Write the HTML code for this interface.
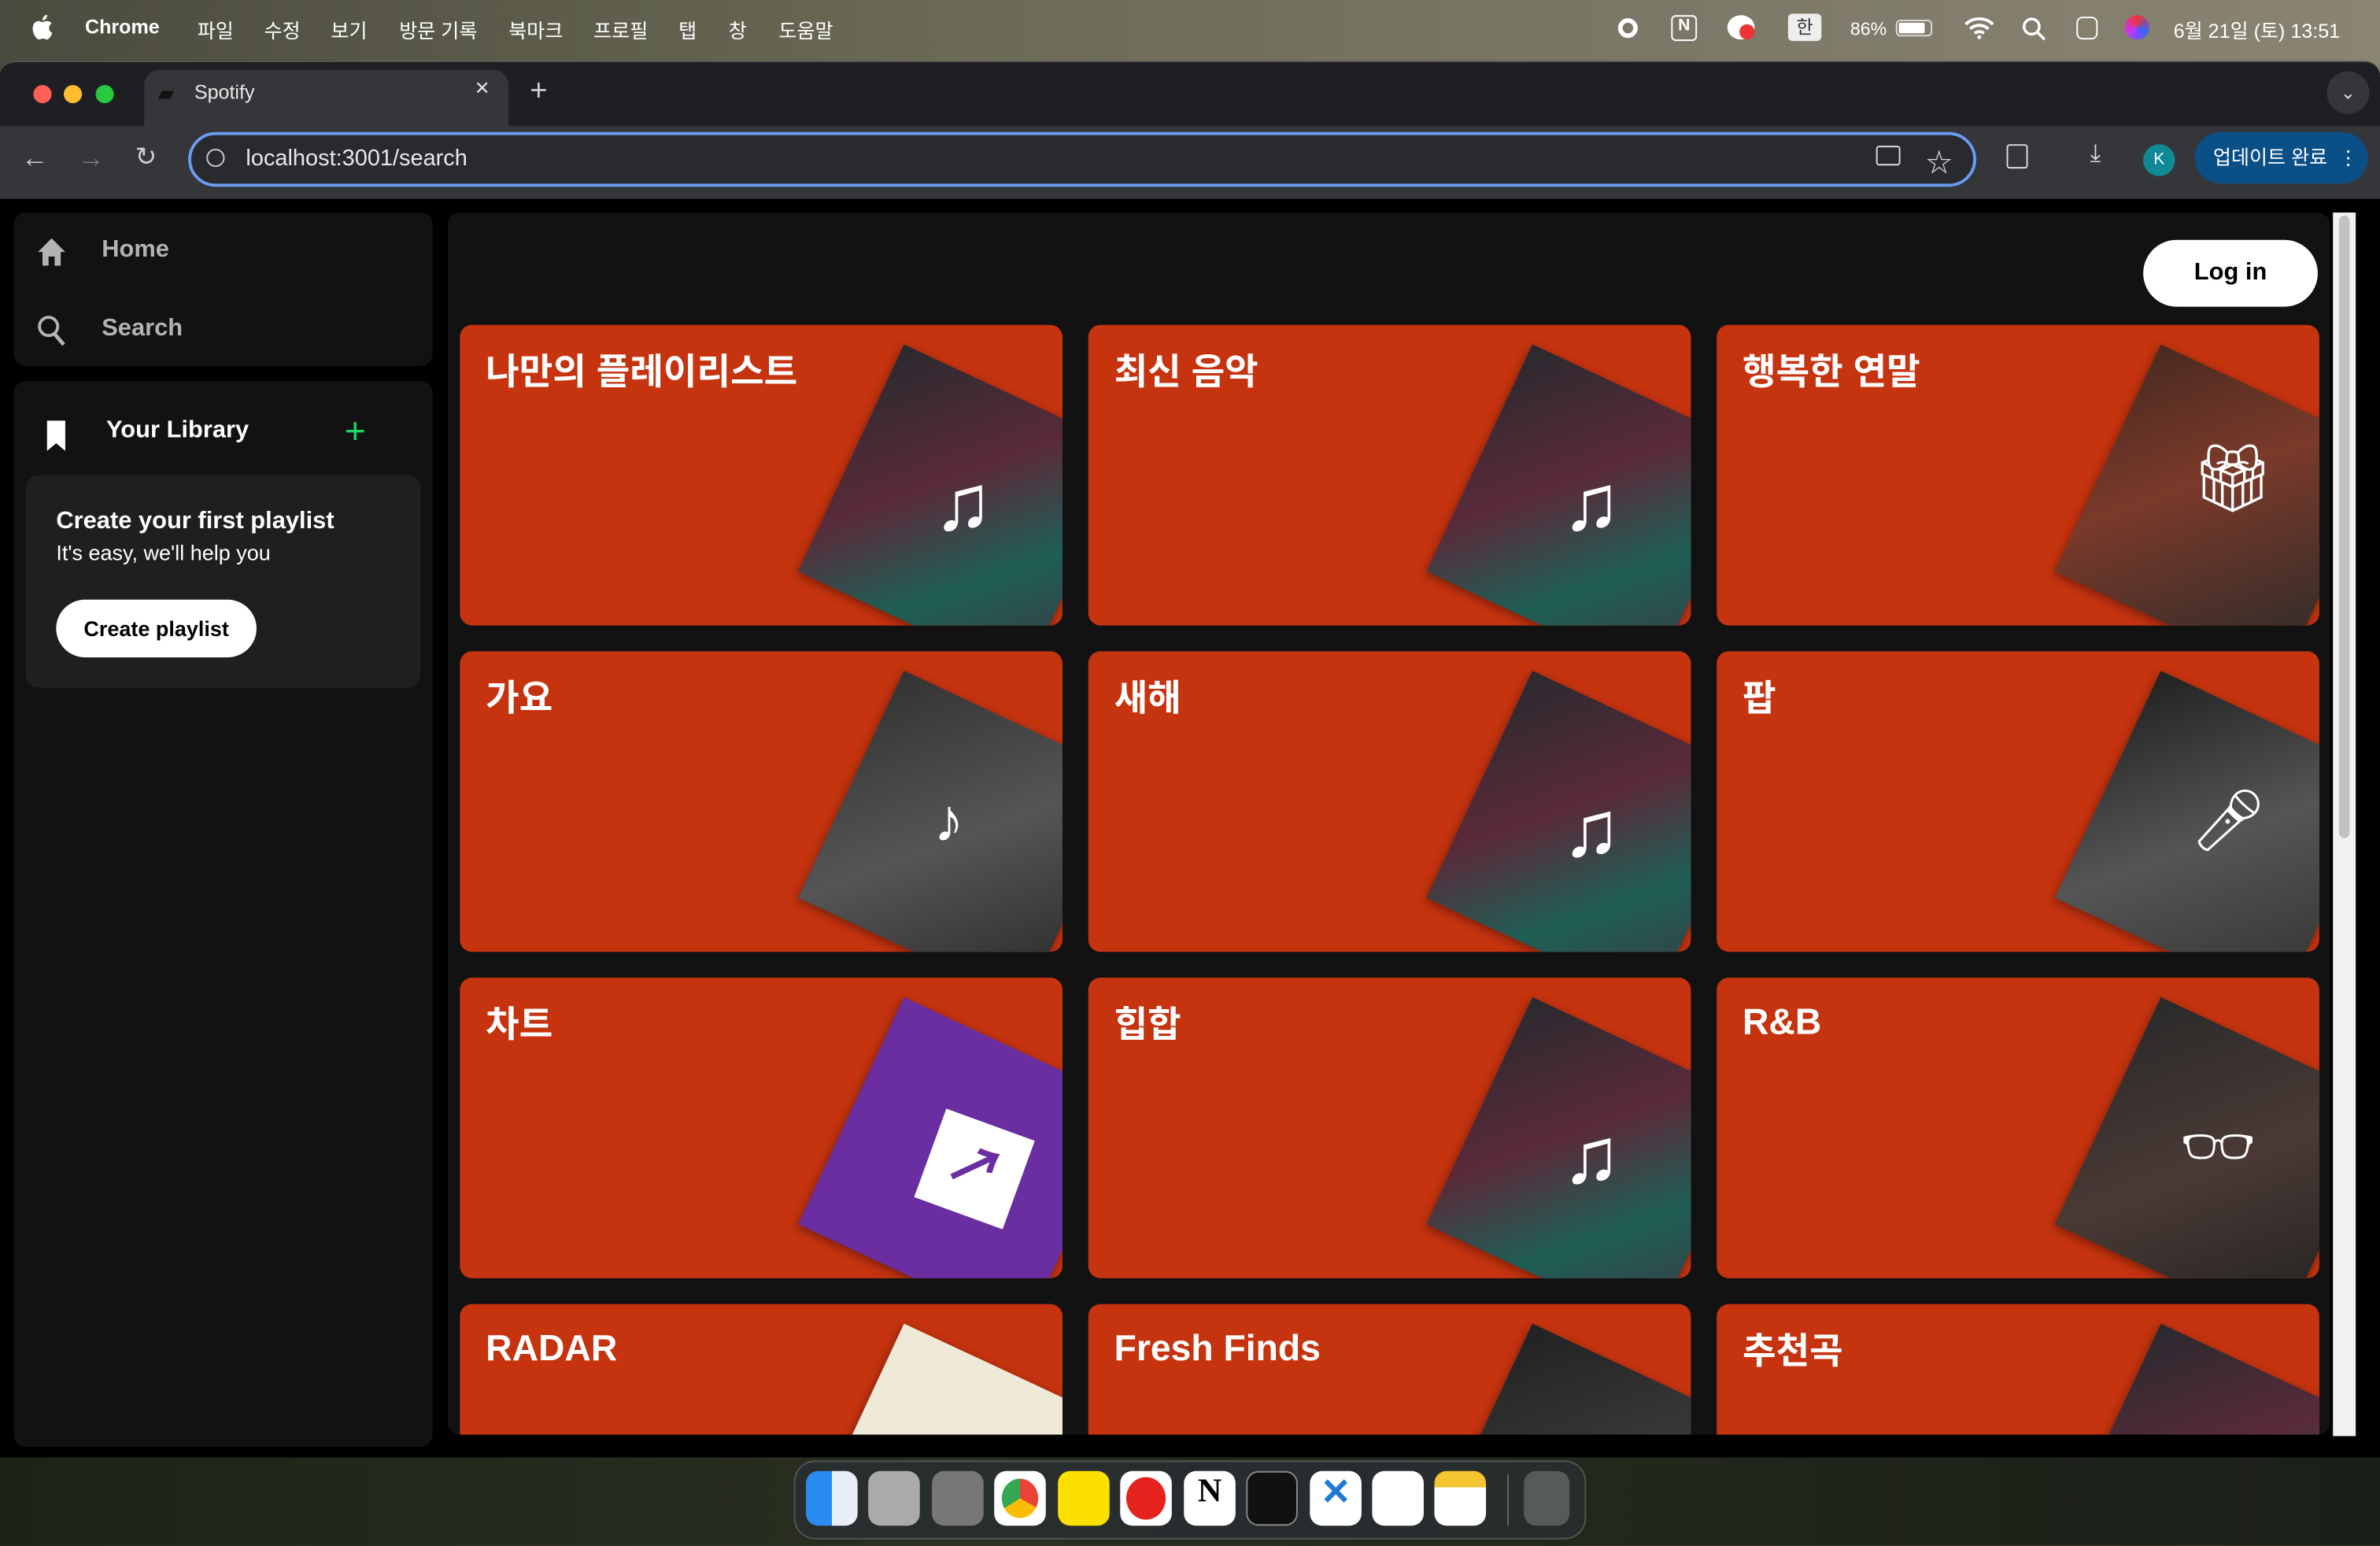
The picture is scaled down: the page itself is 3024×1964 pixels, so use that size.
<!DOCTYPE html>
<html><head><meta charset="utf-8"><style>
*{margin:0;padding:0;box-sizing:border-box}
html,body{width:3024px;height:1964px;overflow:hidden;background:#1e241c}
#s{position:absolute;left:0;top:0;width:1568px;height:1018px;transform:scale(1.92857);transform-origin:0 0;font-family:"Liberation Sans","Noto Sans CJK KR",sans-serif;background:linear-gradient(90deg,#4a4a3e,#6b6a55 40%,#7c7868 70%,#8a8472);overflow:hidden}
.a{position:absolute}
.menu{color:#fff;font-size:13px;top:10px}
.win{left:0;top:40px;width:1568px;height:920px;background:#000;border-radius:10px 10px 0 0;overflow:hidden;border-top:1px solid #555}
.tabbar{left:0;top:0;width:1568px;height:42px;background:#1e1f22}
.tool{left:0;top:42px;width:1568px;height:48px;background:#35363a}
.panel{background:#121212;border-radius:8px}
.card{background:#c5330f;border-radius:8px;overflow:hidden;width:397px;height:198px}
.card h3{position:absolute;left:17px;top:11px;color:#fff;font-size:24px;font-weight:bold}
.img{position:absolute;width:165px;height:165px;left:250px;top:40px;transform:rotate(25deg);background:linear-gradient(135deg,#2a2a2e,#5a2a3a 40%,#1f5f55 70%,#3a3a45);box-shadow:0 2px 6px rgba(0,0,0,.4)}
.note{position:absolute;left:312px;top:92px;color:#fff;font-size:52px;line-height:1}
.dock{left:523px;top:962px;width:522px;height:52px;background:rgba(40,45,50,.8);border-radius:14px;border:1px solid rgba(255,255,255,.2)}
.di{position:absolute;top:6px;width:34px;height:36px;border-radius:8px}
</style></head><body><div id="s">
<div class="a" style="left:0;top:958px;width:1568px;height:60px;background:linear-gradient(90deg,#1c2418,#2a2f20 40%,#1a1f18)"></div>
<svg class="a" style="left:20px;top:9px" width="15" height="18" viewBox="0 0 15 18"><path d="M12.3 9.5c0-2 1.6-2.9 1.7-3-1-1.4-2.4-1.6-2.9-1.6-1.2-.1-2.4.7-3 .7s-1.6-.7-2.6-.7C4.200 4.900 2.900 5.700 2.200 7c-1.400 2.400-.4 6 1 8 .7 1 1.500 2 2.500 2s1.400-.6 2.600-.6 1.500.6 2.600.6 1.700-1 2.400-2c.8-1.100 1.100-2.200 1.100-2.300 0 0-2.100-.8-2.100-3.200zM10.300 3.300c.5-.7.9-1.600.8-2.500-.8 0-1.800.5-2.300 1.200-.5.600-.9 1.500-.8 2.400.9.100 1.800-.4 2.300-1.100z" fill="#fff"/></svg>
<div class="a menu" style="left:56px;font-weight:bold">Chrome</div>
<div class="a menu" style="left:130px">파일</div><div class="a menu" style="left:174px">수정</div><div class="a menu" style="left:218px">보기</div><div class="a menu" style="left:263px">방문 기록</div><div class="a menu" style="left:335px">북마크</div><div class="a menu" style="left:391px">프로필</div><div class="a menu" style="left:447px">탭</div><div class="a menu" style="left:480px">창</div><div class="a menu" style="left:513px">도움말</div>
<div class="a menu" style="left:1219px;font-size:12px;top:12px">86%</div>
<div class="a" style="left:1249px;top:13px;width:24px;height:11px;border:1px solid #ddd;border-radius:3px"><div style="width:17px;height:7px;margin:1px;background:#fff;border-radius:1px"></div></div>
<div class="a" style="left:1178px;top:9px;width:22px;height:18px;background:#eee;border-radius:3px;color:#333;font-size:12px;text-align:center">한</div>
<div class="a" style="left:1138px;top:10px;width:18px;height:16px;border-radius:50%;background:#fff"></div>
<div class="a" style="left:1146px;top:16px;width:10px;height:10px;border-radius:50%;background:#e33"></div>
<svg class="a" style="left:1294px;top:11px" width="20" height="15" viewBox="0 0 20 15"><path d="M1 5a13 13 0 0 1 18 0M4 8a9 9 0 0 1 12 0M7 11a4.5 4.5 0 0 1 6 0" stroke="#fff" stroke-width="2" fill="none"/><circle cx="10" cy="13.5" r="1.3" fill="#fff"/></svg>
<svg class="a" style="left:1332px;top:11px" width="16" height="16" viewBox="0 0 16 16"><circle cx="6.5" cy="6.5" r="5" stroke="#fff" stroke-width="1.8" fill="none"/><path d="M10 10l5 5" stroke="#fff" stroke-width="1.8"/></svg>
<div class="a" style="left:1368px;top:11px;width:14px;height:15px;border-radius:4px;border:1.5px solid #fff"></div>
<div class="a menu" style="left:1432px">6월 21일 (토) 13:51</div>
<div class="a" style="left:1066px;top:12px;width:13px;height:13px;border-radius:50%;border:3px solid #fff"></div>
<div class="a" style="left:1101px;top:10px;width:17px;height:17px;border:1.5px solid #fff;border-radius:3px;color:#fff;font-size:11px;text-align:center;font-weight:bold">N</div>
<div class="a" style="left:1400px;top:10px;width:16px;height:16px;border-radius:50%;background:conic-gradient(#e33,#36f,#c3f,#e33)"></div>

<div class="a win">
 <div class="a tabbar">
  <div class="a" style="left:22px;top:15px;width:12px;height:12px;border-radius:50%;background:#fe5f57"></div>
  <div class="a" style="left:42px;top:15px;width:12px;height:12px;border-radius:50%;background:#febc2e"></div>
  <div class="a" style="left:63px;top:15px;width:12px;height:12px;border-radius:50%;background:#28c840"></div>
  <div class="a" style="left:95px;top:5px;width:240px;height:38px;background:#35363a;border-radius:10px 10px 0 0"></div>
  <div class="a" style="left:104px;top:12px;width:16px;height:16px;color:#111;font-size:14px">▰</div>
  <div class="a" style="left:128px;top:12px;color:#e8e8e8;font-size:13px">Spotify</div>
  <div class="a" style="left:313px;top:9px;color:#e8e8e8;font-size:16px">×</div>
  <div class="a" style="left:349px;top:8px;color:#ccc;font-size:20px">+</div>
  <div class="a" style="left:1533px;top:6px;width:28px;height:28px;border-radius:50%;background:#35363a;color:#ddd;font-size:12px;text-align:center;line-height:28px">⌄</div>
 </div>
 <div class="a tool">
  <div class="a" style="left:14px;top:11px;color:#ccc;font-size:18px">←</div>
  <div class="a" style="left:51px;top:11px;color:#777;font-size:18px">→</div>
  <div class="a" style="left:89px;top:11px;color:#ccc;font-size:17px">↻</div>
  <div class="a" style="left:124px;top:4px;width:1178px;height:36px;border:2px solid #6a9cf2;border-radius:18px;background:#282a2e"></div>
  <div class="a" style="left:136px;top:15px;width:12px;height:12px;border:1.3px solid #ccc;border-radius:50%"></div>
  <div class="a" style="left:162px;top:13px;color:#e8e8e8;font-size:15px">localhost:3001/search</div>
  <div class="a" style="left:1269px;top:10px;color:#ddd;font-size:17px">☆</div>
  <div class="a" style="left:1236px;top:13px;width:16px;height:13px;border:1.5px solid #ddd;border-radius:2px"></div>
  <div class="a" style="left:1322px;top:12px;width:14px;height:16px;border:1.5px solid #ddd;border-radius:2px"></div>
  <div class="a" style="left:1377px;top:10px;color:#ddd;font-size:16px">⤓</div>
  <div class="a" style="left:1412px;top:12px;width:21px;height:21px;border-radius:50%;background:#0f8a94;color:#fff;font-size:11px;text-align:center;line-height:21px">K</div>
  <div class="a" style="left:1446px;top:4px;width:114px;height:34px;border-radius:17px;background:#0a4f86;color:#fff;font-size:13px;line-height:34px;padding-left:12px">업데이트 완료 &nbsp;⋮</div>
 </div>
 <div class="a panel" style="left:9px;top:99px;width:276px;height:101px">
  <svg class="a" style="left:15px;top:16px" width="20" height="20" viewBox="0 0 20 20"><path d="M10 1 L19 10 H16 V19 H12 V13 H8 V19 H4 V10 H1Z" fill="#b3b3b3"/></svg>
  <div class="a" style="left:58px;top:16px;color:#b3b3b3;font-size:16px;font-weight:bold">Home</div>
  <svg class="a" style="left:15px;top:67px" width="20" height="22" viewBox="0 0 20 22"><circle cx="8" cy="8" r="6" stroke="#b3b3b3" stroke-width="2" fill="none"/><path d="M12 13 L18 20" stroke="#b3b3b3" stroke-width="2.5"/></svg>
  <div class="a" style="left:58px;top:68px;color:#b3b3b3;font-size:16px;font-weight:bold">Search</div>
 </div>
 <div class="a panel" style="left:9px;top:210px;width:276px;height:702px">
  <svg class="a" style="left:21px;top:26px" width="14" height="20" viewBox="0 0 14 20"><path d="M1 0 H13 V20 L7 15 L1 20Z" fill="#fff"/></svg>
  <div class="a" style="left:61px;top:24px;color:#fff;font-size:16px;font-weight:bold">Your Library</div>
  <div class="a" style="left:218px;top:20px;color:#1ed760;font-size:24px">+</div>
  <div class="a" style="left:8px;top:62px;width:260px;height:140px;background:#1f1f1f;border-radius:8px">
   <div class="a" style="left:20px;top:22px;color:#fff;font-size:16px;font-weight:bold">Create your first playlist</div>
   <div class="a" style="left:20px;top:43px;color:#fff;font-size:14px">It's easy, we'll help you</div>
   <div class="a" style="left:20px;top:82px;width:132px;height:38px;background:#fff;border-radius:19px;color:#000;font-size:14px;font-weight:bold;text-align:center;line-height:38px">Create playlist</div>
  </div>
 </div>
 <div class="a panel" style="left:295px;top:99px;width:1240px;height:805px;overflow:hidden">
  <div class="a" style="left:1117px;top:18px;width:115px;height:44px;background:#fff;border-radius:22px;color:#000;font-size:16px;font-weight:bold;text-align:center;line-height:44px">Log in</div>
  <div class="a card" style="left:8px;top:74px"><div class="img"></div><div class="note">♫</div><h3>나만의 플레이리스트</h3></div>
  <div class="a card" style="left:422px;top:74px"><div class="img"></div><div class="note">♫</div><h3>최신 음악</h3></div>
  <div class="a card" style="left:836px;top:74px"><div class="img" style="background:linear-gradient(135deg,#4a2a20,#7a3a2a 40%,#2a2a2a)"></div><div class="note" style="font-size:44px;top:80px">🎁︎</div><h3>행복한 연말</h3></div>
  <div class="a card" style="left:8px;top:289px"><div class="img" style="background:linear-gradient(135deg,#333,#555 50%,#2a2a2a)"></div><div class="note" style="font-size:40px">♪</div><h3>가요</h3></div>
  <div class="a card" style="left:422px;top:289px"><div class="img"></div><div class="note">♫</div><h3>새해</h3></div>
  <div class="a card" style="left:836px;top:289px"><div class="img" style="background:linear-gradient(135deg,#222,#555 50%,#333)"></div><div class="note" style="font-size:40px">🎤︎</div><h3>팝</h3></div>
  <div class="a card" style="left:8px;top:504px"><div class="img" style="background:#6a2ea0"></div><div class="a" style="left:308px;top:95px;width:62px;height:62px;background:#fff;transform:rotate(20deg);color:#6a2ea0;font-size:38px;text-align:center;line-height:62px;font-weight:bold">↗</div><h3>차트</h3></div>
  <div class="a card" style="left:422px;top:504px"><div class="img"></div><div class="note">♫</div><h3>힙합</h3></div>
  <div class="a card" style="left:836px;top:504px"><div class="img" style="background:linear-gradient(135deg,#2a2a2a,#4a3a35 50%,#222)"></div><div class="note" style="font-size:40px;left:305px">👓︎</div><h3 style="top:16px">R&amp;B</h3></div>
  <div class="a card" style="left:8px;top:719px"><div class="img" style="background:#efe9d8"></div><h3 style="top:16px">RADAR</h3></div>
  <div class="a card" style="left:422px;top:719px"><div class="img" style="background:linear-gradient(135deg,#222,#555)"></div><h3 style="top:16px">Fresh Finds</h3></div>
  <div class="a card" style="left:836px;top:719px"><div class="img"></div><h3>추천곡</h3></div>
 </div>
 <div class="a" style="left:1537px;top:99px;width:15px;height:806px;background:#f1f1f1"></div>
 <div class="a" style="left:1541px;top:101px;width:7px;height:410px;background:#c1c1c1;border-radius:4px"></div>
</div>

<div class="a dock">
 <div class="di" style="left:7px;background:linear-gradient(90deg,#2a8cf0 50%,#e8eef6 50%)"></div>
 <div class="di" style="left:48px;background:#aaa"></div>
 <div class="di" style="left:90px;background:#777"></div>
 <div class="di" style="left:131px;background:#fff"><div style="margin:5px;width:24px;height:26px;border-radius:50%;background:conic-gradient(#ea4335 0 33%,#fbbc05 0 66%,#34a853 0)"></div></div>
 <div class="di" style="left:173px;background:#fce000"></div>
 <div class="di" style="left:214px;background:#fff"><div style="margin:4px;width:26px;height:28px;border-radius:50%;background:#e5221e"></div></div>
 <div class="di" style="left:256px;background:#fff;color:#000;font-weight:bold;font-size:22px;text-align:center;font-family:'Liberation Serif',serif">N</div>
 <div class="di" style="left:297px;background:#111;border:1px solid #888"></div>
 <div class="di" style="left:339px;background:#fff;color:#1f7ad6;font-size:24px;text-align:center;font-weight:bold">✕</div>
 <div class="di" style="left:380px;background:#fff"></div>
 <div class="di" style="left:421px;background:linear-gradient(#f5c431 30%,#fff 30%)"></div>
 <div class="a" style="left:469px;top:8px;width:1px;height:34px;background:#666"></div>
 <div class="di" style="left:480px;background:rgba(200,200,200,.3);width:30px"></div>
</div>
</div></body></html>
